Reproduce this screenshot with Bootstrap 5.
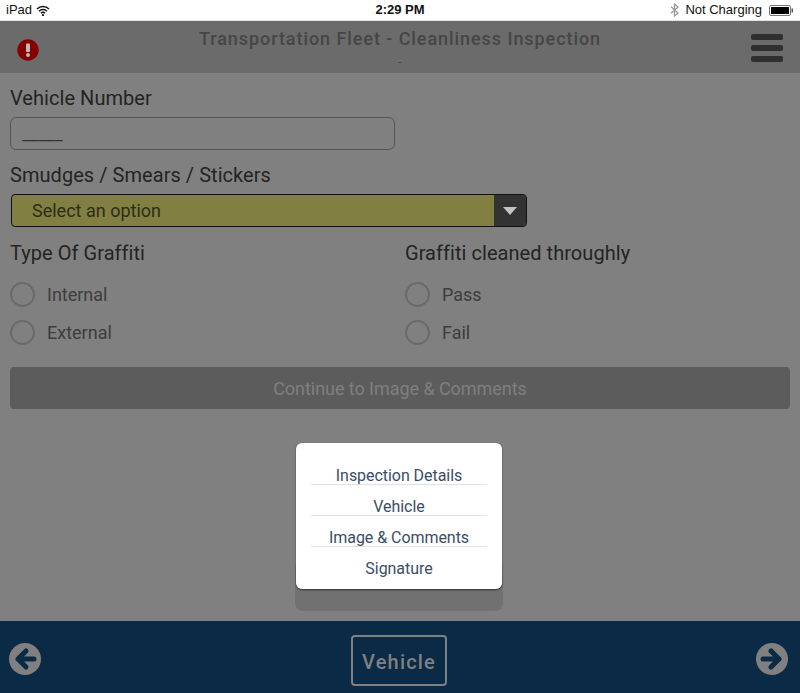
<!DOCTYPE html>
<html lang="en">
<head>
    <meta charset="UTF-8">
    <meta name="viewport" content="width=device-width, initial-scale=1">
    <title>Cleanliness Inspection</title>
    <link href="https://cdn.jsdelivr.net/npm/bootstrap@5.3.0/dist/css/bootstrap.min.css" rel="stylesheet">
    <style>
        html, body { height: 693px; overflow: hidden; }
        body { background: #808080; font-family: Roboto, sans-serif; color: #242424; }
        .app-shell { height: 693px; position: relative; }
        .status-bar { height: 21px; background: #fff; border-bottom: 1px solid #e4e4e4; color: #111; font: 13px/20px "Liberation Sans", sans-serif; padding: 0 7px 0 6px; }
        .status-time { font-weight: 700; left: 0; right: 0; text-align: center; position: absolute; top: 0; }
        .bt-icon { margin-right: 6px; }
        .charge-text { margin-right: 7px; }
        .top-head { height: 52px; background: #6b6b6b; padding: 2px 17px 0 17px; position: relative; }
        .alert-icon { margin-top: 3px; }
        .head-title { position: absolute; left: 0; right: 0; top: 7px; text-align: center; font-size: 18px; line-height: 22px; font-weight: 500; letter-spacing: .93px; color: #464646; }
        .head-sub { position: absolute; left: 0; right: 0; top: 34px; text-align: center; font-size: 12px; line-height: 14px; color: #464646; }
        .burger-bar { display: block; width: 32px; height: 6px; border-radius: 2px; background: #2f2f2f; }
        .burger-stack { gap: 5px; }
        .form-area { padding: 13px 10px 0; height: 548px; }
        .field-label { font-size: 20px; line-height: 24px; margin: 0 0 7px; letter-spacing: .05px; color: #242424; }
        .field-label.tight-label { margin-bottom: 17px; }
        .field-input.form-control { height: 33px; width: 385px; background: #808080; border: 1px solid #555; border-radius: 6px; font-size: 18px; padding: 4px 11px; color: #333; margin-bottom: 13px; box-shadow: none; }
        .select-bar { height: 33px; width: 516px; background: #817f42; border: 1px solid #111; border-radius: 4px; margin-left: 1px; overflow: hidden; margin-bottom: 14px; }
        .select-text { padding-left: 20px; font-size: 18px; line-height: 31px; color: #2d2d15; }
        .select-btn { width: 32px; background: #333; }
        .select-arrow { width: 0; height: 0; border-left: 7px solid transparent; border-right: 7px solid transparent; border-top: 8px solid #c4c4c4; }
        .choice-row { height: 25px; margin-top: 13px; gap: 12px; font-size: 18px; color: #3d3d3d; }
        .choice-dot { width: 25px; height: 25px; border-radius: 50%; border: 2px solid #676b6e; flex: none; }
        .col-left { width: 395px; }
        .go-btn.btn { width: 780px; height: 42px; margin-top: 22px; padding: 0; background: #5c5c5c; border: 0; border-radius: 4px; color: #7f7f7f; font-size: 18px; letter-spacing: -.05px; opacity: 1; }
        .bottom-bar { height: 72px; background: #0a2a45; padding: 3px 12px 0 9px; position: relative; }
        .step-box { position: absolute; left: 351px; top: 14px; width: 96px; height: 51px; padding-top: 2px; border: 2px solid #808080; border-radius: 4px; color: #808080; font-size: 20px; font-weight: 500; letter-spacing: 1.2px; }
        .nav-popup { position: absolute; left: 296px; top: 443px; width: 206px; height: 146px; background: #fff; border-radius: 6px; box-shadow: 0 1px 2px rgba(0,0,0,.55); padding: 11px 15px 0; z-index: 2; }
        .popup-shade { position: absolute; left: 295px; top: 560px; width: 208px; height: 51px; background: #717171; border-radius: 8px; z-index: 1; }
        .popup-item { height: 31px; padding-top: 13px; line-height: 18px; text-align: center; font-size: 16px; color: #3b4d66; border-bottom: 1px solid #dfe1e4; letter-spacing: -.05px; }
        .popup-item:last-child { border-bottom: 0; }
    </style>
</head>
<body>
    <div class="app-shell">
        <div class="status-bar d-flex align-items-center justify-content-between">
            <div class="d-flex align-items-center gap-1">
                <span>iPad</span>
                <svg width="14" height="11" viewBox="0 0 14 11"><path d="M1 4a8.6 8.6 0 0 1 12 0M3 6.2a5.6 5.6 0 0 1 8 0M5 8.2a2.8 2.8 0 0 1 4 0" fill="none" stroke="#111" stroke-width="1.5"/><circle cx="7" cy="10" r="1.1" fill="#111"/></svg>
            </div>
            <span class="status-time">2:29 PM</span>
            <div class="d-flex align-items-center">
                <svg class="bt-icon" width="9" height="14" viewBox="0 0 9 14"><path d="M1 3.8l7 6.2-3.5 3V1L8 4 1 10.2" fill="none" stroke="#999" stroke-width="1.3"/></svg>
                <span class="charge-text">Not Charging</span>
                <svg width="24" height="11" viewBox="0 0 24 11"><rect x=".5" y=".5" width="21" height="10" rx="1.5" fill="#fff" stroke="#777"/><rect x="2" y="2" width="18" height="7" fill="#000"/><rect x="22.5" y="3.5" width="1.5" height="4" fill="#555"/></svg>
            </div>
        </div>

        <div class="top-head d-flex align-items-center justify-content-between">
            <svg class="alert-icon" width="22" height="22" viewBox="0 0 22 22"><circle cx="11" cy="11" r="10.7" fill="#850000"/><rect x="9" y="4.5" width="4" height="8.5" rx="1" fill="#bbb"/><circle cx="11" cy="16" r="2" fill="#bbb"/></svg>
            <div class="head-title">Transportation Fleet - Cleanliness Inspection</div>
            <div class="head-sub">-</div>
            <div class="burger-stack d-flex flex-column">
                <span class="burger-bar"></span>
                <span class="burger-bar"></span>
                <span class="burger-bar"></span>
            </div>
        </div>

        <div class="form-area">
            <label class="field-label d-block" for="veh-num">Vehicle Number</label>
            <input id="veh-num" class="form-control field-input" value="_____">
            <div class="field-label">Smudges / Smears / Stickers</div>
            <div class="select-bar d-flex justify-content-between">
                <div class="select-text">Select an option</div>
                <div class="select-btn d-flex align-items-center justify-content-center"><span class="select-arrow"></span></div>
            </div>
            <div class="d-flex">
                <div class="col-left">
                    <div class="field-label tight-label">Type Of Graffiti</div>
                    <div class="choice-row d-flex align-items-center"><span class="choice-dot"></span>Internal</div>
                    <div class="choice-row d-flex align-items-center"><span class="choice-dot"></span>External</div>
                </div>
                <div>
                    <div class="field-label tight-label">Graffiti cleaned throughly</div>
                    <div class="choice-row d-flex align-items-center"><span class="choice-dot"></span>Pass</div>
                    <div class="choice-row d-flex align-items-center"><span class="choice-dot"></span>Fail</div>
                </div>
            </div>
            <button class="btn go-btn d-block" disabled>Continue to Image &amp; Comments</button>
        </div>

        <div class="bottom-bar d-flex align-items-center justify-content-between">
            <svg width="32" height="32" viewBox="0 0 32 32"><circle cx="16" cy="16" r="16" fill="#808080"/><path d="M25 16H9M17 8l-8 8 8 8" fill="none" stroke="#0a2a45" stroke-width="5" stroke-linecap="round" stroke-linejoin="round"/></svg>
            <div class="step-box d-flex align-items-center justify-content-center">Vehicle</div>
            <svg width="32" height="32" viewBox="0 0 32 32"><circle cx="16" cy="16" r="16" fill="#808080"/><path d="M7 16h16M15 8l8 8-8 8" fill="none" stroke="#0a2a45" stroke-width="5" stroke-linecap="round" stroke-linejoin="round"/></svg>
        </div>

        <div class="popup-shade"></div>
        <div class="nav-popup">
            <div class="popup-item">Inspection Details</div>
            <div class="popup-item">Vehicle</div>
            <div class="popup-item">Image &amp; Comments</div>
            <div class="popup-item">Signature</div>
        </div>
    </div>
    <script src="https://cdn.jsdelivr.net/npm/bootstrap@5.3.0/dist/js/bootstrap.bundle.min.js"></script>
</body>
</html>
